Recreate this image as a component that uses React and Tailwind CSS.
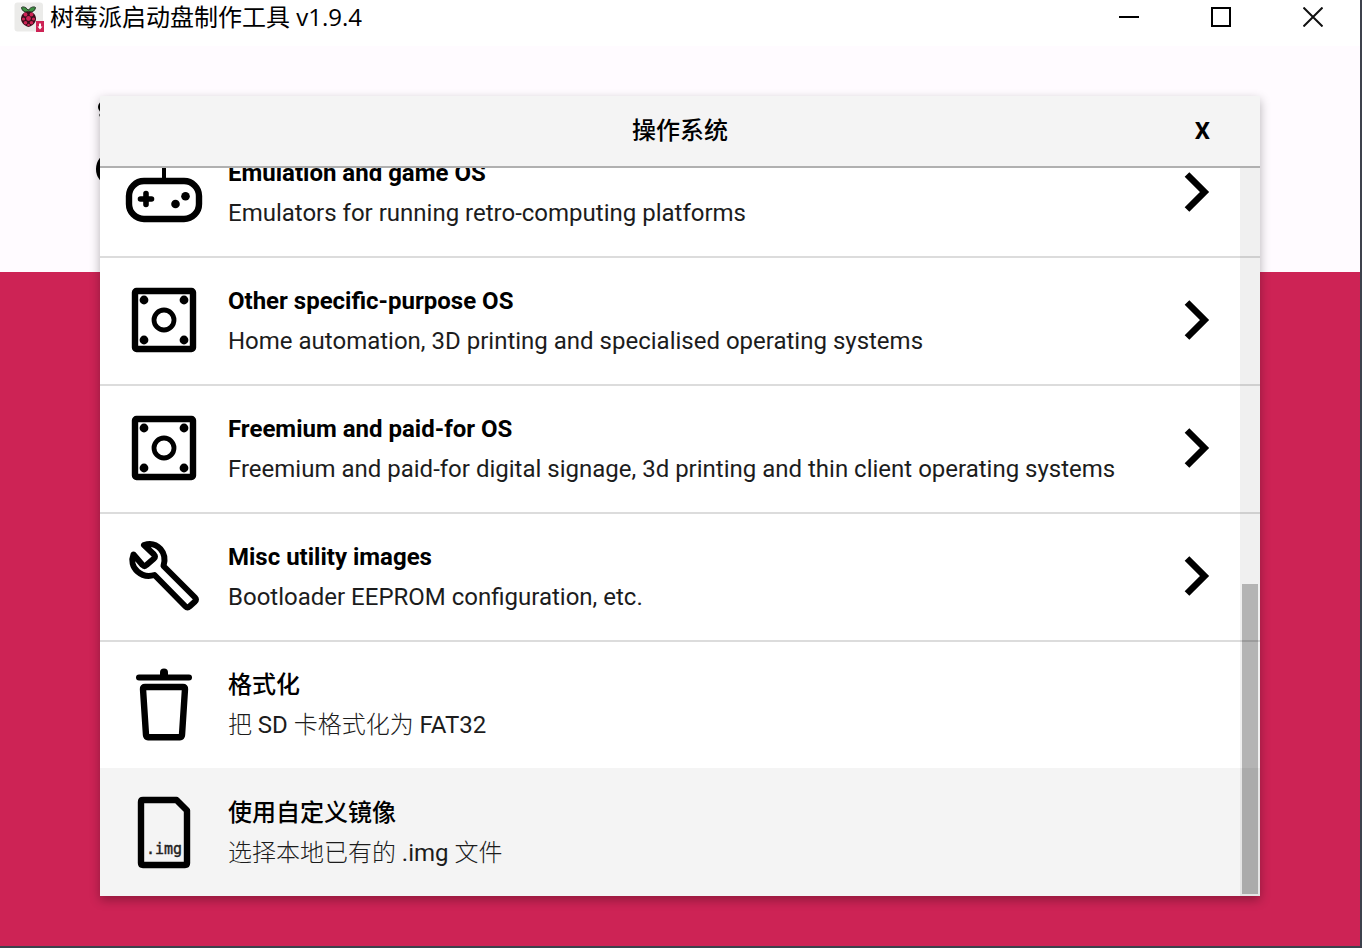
const CJK = "font-['Roboto','Noto_Sans_CJK_SC',sans-serif]";

function GamepadIcon() {
  return (
    <svg width="80" height="80" viewBox="0 1 80 80" fill="none" stroke="#000" aria-hidden="true">
      <path d="M40 28V8" strokeWidth="4" />
      <rect x="5" y="29" width="70" height="38" rx="15" strokeWidth="6.4" />
      <path d="M16.500 47h11M22 41.500v11" strokeWidth="5.6" strokeLinecap="round" />
      <circle cx="51.500" cy="52" r="4.300" fill="#000" stroke="none" />
      <circle cx="61.500" cy="44.300" r="4.300" fill="#000" stroke="none" />
    </svg>
  );
}

function BoardIcon() {
  return (
    <svg width="80" height="80" viewBox="0 1 80 80" fill="none" stroke="#000" aria-hidden="true">
      <rect x="11" y="11" width="58" height="58" rx="1.500" strokeWidth="6.400" />
      <circle cx="40" cy="40" r="10" strokeWidth="4.800" />
      <g fill="#000" stroke="none">
        <circle cx="20" cy="20" r="4.400" />
        <circle cx="60" cy="20" r="4.400" />
        <circle cx="20" cy="60" r="4.400" />
        <circle cx="60" cy="60" r="4.400" />
      </g>
    </svg>
  );
}

function WrenchIcon() {
  return (
    <svg width="80" height="80" viewBox="0 1 80 80" fill="none" stroke="#000" strokeWidth="6" strokeLinejoin="round" strokeLinecap="round" aria-hidden="true">
      <path d="M20 9C26 7 32 8 36.500 13C40.500 17.500 41.500 23.500 39.500 30L71 61.500Q73 63.500 71 65.500L65.500 70.500Q63.500 72.500 61.500 70.500L30.500 39C24 41 18 39.500 13.500 35.500C8.500 31 7 24.500 9.500 18.500L18.500 29Q20.500 31 22.500 29L30 22.500Q32 20.500 30 18.500Z" />
    </svg>
  );
}

function TrashIcon() {
  return (
    <svg width="80" height="80" viewBox="0 1 80 80" fill="none" stroke="#000" strokeLinejoin="round" strokeLinecap="round" aria-hidden="true">
      <path d="M15 13.500H65" strokeWidth="6" />
      <path d="M40 8.500V12" strokeWidth="8" />
      <path d="M21 23H59Q61.200 23 61 25L58 71Q57.800 73.200 56 73.200H24Q22.200 73.200 22 71L19 25Q18.800 23 21 23Z" strokeWidth="6.400" />
    </svg>
  );
}

function ImageFileIcon() {
  return (
    <svg width="80" height="80" viewBox="0 1 80 80" fill="none" stroke="#000" aria-hidden="true">
      <path d="M19 8H52.500L63 18.500V71Q63 73 61 73H19Q17 73 17 71V10Q17 8 19 8Z" strokeWidth="6.400" strokeLinejoin="round" />
      <text x="22" y="62" fill="#222" stroke="#222" strokeWidth="0.4" fontSize="15" fontFamily="'DejaVu Sans Mono', monospace">.img</text>
    </svg>
  );
}

function Chevron() {
  return (
    <svg width="80" height="80" viewBox="0 1 80 80" fill="none" stroke="#000" strokeWidth="6.600" aria-hidden="true">
      <path d="M31 22.500L48.500 40L31 57.500" />
    </svg>
  );
}

function AppLogo() {
  return (
    <svg width="30" height="30" viewBox="0 0 30 30" aria-hidden="true">
      <rect x="0.500" y="0.500" width="28.500" height="29" rx="3" fill="#ebebe9" />
      <path d="M14 8C11.500 4.500 8.500 4.500 7.500 5.500C8 8.500 10 10.300 13 10L14.500 9.300L16 10C19 10.300 21 8.500 21.500 5.500C20.500 4.500 17 4.500 14.500 8Z" fill="#3c9141" stroke="#1d2b1d" strokeWidth="1" />
      <path d="M14.500 9.500C10 9.500 7 13 7 16.800C7 20.800 10.500 24 14.500 25C18.500 24 22 20.800 22 16.800C22 13 19 9.500 14.500 9.500Z" fill="#3a0d1a" />
      <g fill="#cd2355">
        <circle cx="14.500" cy="16.500" r="2.400" />
        <circle cx="11.500" cy="12.500" r="1.900" />
        <circle cx="17.500" cy="12.500" r="1.900" />
        <circle cx="9.500" cy="17" r="1.600" />
        <circle cx="19.500" cy="17" r="1.600" />
        <circle cx="11.500" cy="20.800" r="1.800" />
        <circle cx="17.500" cy="20.800" r="1.800" />
        <circle cx="14.500" cy="23" r="1.300" />
      </g>
      <rect x="22" y="19" width="8" height="11" fill="#cd2355" />
      <path d="M26 21.500V25" stroke="#fff" strokeWidth="2" />
      <path d="M23.500 24.500H28.500L26 27.500Z" fill="#fff" />
    </svg>
  );
}

const items = [
  { icon: GamepadIcon, title: "Emulation and game OS", text: "Emulators for running retro-computing platforms", more: true },
  { icon: BoardIcon, title: "Other specific-purpose OS", text: "Home automation, 3D printing and specialised operating systems", more: true },
  { icon: BoardIcon, title: "Freemium and paid-for OS", text: "Freemium and paid-for digital signage, 3d printing and thin client operating systems", more: true },
  { icon: WrenchIcon, title: "Misc utility images", text: "Bootloader EEPROM configuration, etc.", more: true },
  {
    icon: TrashIcon,
    title: "格式化",
    text: <>把 <span className="font-normal">SD</span> 卡格式化为 <span className="font-normal">FAT32</span></>,
    cjk: true,
  },
  {
    icon: ImageFileIcon,
    title: "使用自定义镜像",
    text: <>选择本地已有的 <span className="font-normal">.img</span> 文件</>,
    cjk: true,
    active: true,
  },
];

function OsRow({ item }) {
  const Icon = item.icon;
  return (
    <li className="shrink-0">
      <button
        type="button"
        className={`flex h-32 w-full items-center border-t-2 px-6 text-left text-2xl ${
          item.active ? "border-[#f4f4f4] bg-[#f4f4f4]" : "border-[#dcdcdc] bg-white"
        }`}
      >
        <span className="shrink-0"><Icon /></span>
        <span className="ml-6 flex min-w-0 flex-1 flex-col">
          <span className={`h-10 leading-10 text-black ${item.cjk ? "font-medium" : "font-bold"}`}>{item.title}</span>
          <span className={`h-10 leading-10 whitespace-nowrap text-[#1c1c1c] ${item.cjk ? "font-light" : "font-normal"}`}>{item.text}</span>
        </span>
        {item.more && <span className="shrink-0"><Chevron /></span>}
      </button>
    </li>
  );
}

export default function App() {
  return (
    <div className={`flex h-screen flex-col border-r-2 border-b-2 border-[#3d414c] bg-white text-black ${CJK}`}>
      <header className="flex h-[46px] shrink-0 items-start justify-between bg-white">
        <div className="flex items-center gap-1.5 pl-3.5 pt-0.5">
          <AppLogo />
          <h1 className="text-2xl leading-[30px] font-normal font-['Open_Sans','Noto_Sans_CJK_SC',sans-serif]">树莓派启动盘制作工具 v1.9.4</h1>
        </div>
        <div className="flex pr-px">
          <button type="button" aria-label="最小化" className="flex h-[34px] w-[92px] items-center justify-center">
            <svg width="20" height="20" viewBox="0 0 20 20" stroke="#000" strokeWidth="2"><path d="M0 10H20" /></svg>
          </button>
          <button type="button" aria-label="最大化" className="flex h-[34px] w-[92px] items-center justify-center">
            <svg width="20" height="20" viewBox="0 0 20 20" fill="none" stroke="#000" strokeWidth="2"><rect x="1" y="1" width="18" height="18" /></svg>
          </button>
          <button type="button" aria-label="关闭" className="flex h-[34px] w-[92px] items-center justify-center">
            <svg width="20" height="20" viewBox="0 0 20 20" stroke="#111" strokeWidth="2"><path d="M0.500 0.500L19.500 19.500M19.500 0.500L0.500 19.500" /></svg>
          </button>
        </div>
      </header>

      <main className="relative flex min-h-0 flex-1 flex-col">
        <div className="h-[226px] shrink-0 bg-[#fffbff]">
          <svg className="ml-24" width="40" height="226" viewBox="0 0 40 226" aria-hidden="true">
            <ellipse cx="8" cy="61" rx="6" ry="6" />
            <ellipse cx="9" cy="69" rx="6" ry="3" fill="#555" />
            <ellipse cx="12" cy="123" rx="12" ry="15" />
          </svg>
        </div>
        <div className="flex-1 bg-[#cd2355]" />

        <div className="absolute inset-0 flex px-[100px] py-[50px]">
          <section role="dialog" aria-labelledby="dialog-title" className="flex min-w-0 flex-1 flex-col bg-white shadow-[0_4px_10px_rgba(0,0,0,0.3)]">
            <div className="grid h-[72px] shrink-0 grid-cols-[1fr_auto_1fr] items-center border-b-2 border-[#b0b0b0] bg-[#f4f4f4] text-2xl">
              <span />
              <h2 id="dialog-title" className="font-medium">操作系统</h2>
              <button type="button" aria-label="关闭对话框" className="mr-[50px] justify-self-end font-bold">X</button>
            </div>
            <div className="relative flex min-h-0 flex-1 flex-col">
              <ul className="flex min-h-0 flex-1 flex-col justify-end overflow-hidden">
                {items.map((item) => <OsRow key={item.title} item={item} />)}
              </ul>
              <div className="absolute inset-y-0 right-0 flex w-5 flex-col justify-end bg-black/6 p-0.5">
                <div className="h-[310px] bg-black/25" />
              </div>
            </div>
          </section>
        </div>
      </main>
    </div>
  );
}
